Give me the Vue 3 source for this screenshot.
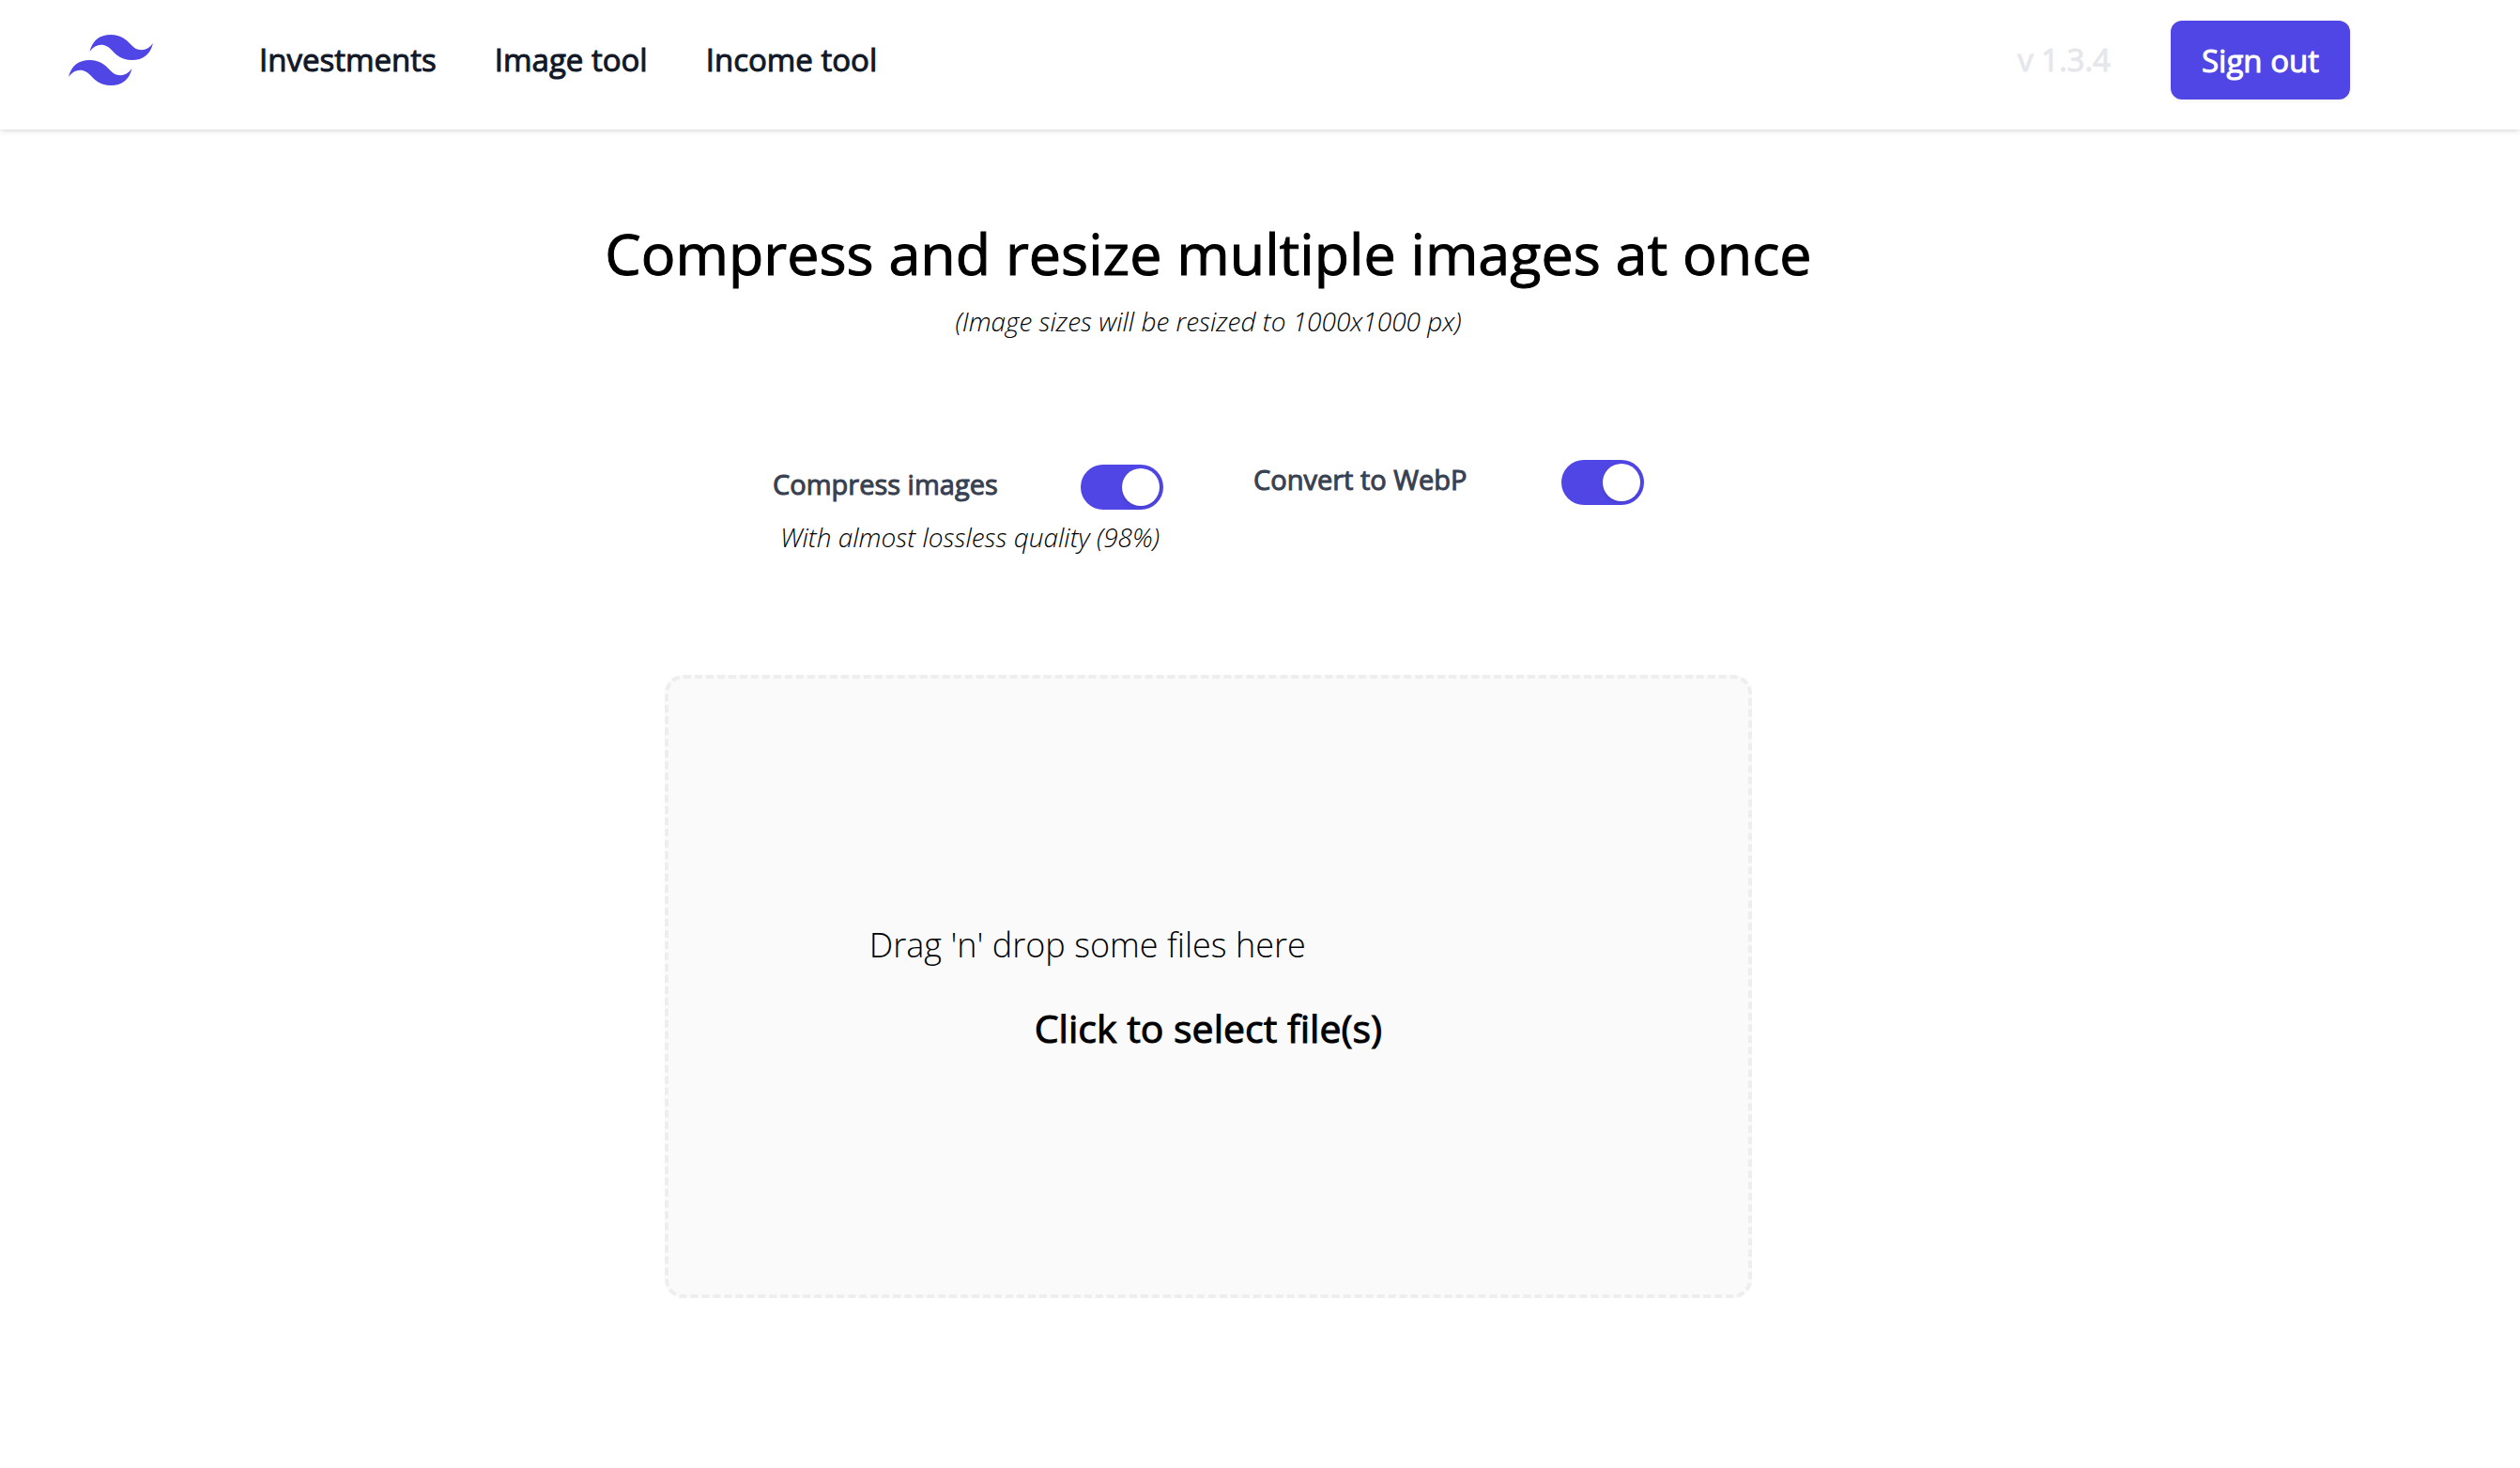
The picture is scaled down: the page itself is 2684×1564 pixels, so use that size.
<script setup>
import { ref } from 'vue'

const links = ['Investments', 'Image tool', 'Income tool']
const compress = ref(true)
const webp = ref(true)
</script>

<template>
  <header class="bar medium">
    <a class="logo" href="#" aria-label="Home">
      <svg viewBox="0 0 54 32.4" fill="currentColor" aria-hidden="true">
        <path d="M27 0c-7.200 0-11.700 3.600-13.500 10.800 2.700-3.600 5.850-4.950 9.450-4.050 2.054.513 3.522 2.004 5.147 3.653C30.744 13.090 33.808 16.200 40.500 16.200c7.200 0 11.700-3.600 13.500-10.800-2.700 3.600-5.850 4.950-9.450 4.050-2.054-.513-3.522-2.004-5.147-3.653C36.756 3.110 33.692 0 27 0zM13.500 16.200C6.300 16.200 1.800 19.800 0 27c2.700-3.600 5.850-4.950 9.450-4.050 2.054.514 3.522 2.004 5.147 3.653C17.244 29.290 20.308 32.400 27 32.400c7.200 0 11.700-3.600 13.500-10.800-2.700 3.600-5.850 4.950-9.450 4.050-2.054-.513-3.522-2.004-5.147-3.653C23.256 19.310 20.192 16.200 13.500 16.200z" />
      </svg>
    </a>
    <nav class="nav">
      <a v-for="link in links" :key="link" href="#">{{ link }}</a>
    </nav>
    <span class="version">v 1.3.4</span>
    <button class="sign-out medium" type="button">Sign out</button>
  </header>
  <main class="page">
    <h1 class="medium">Compress and resize multiple images at once</h1>
    <p class="note">(Image sizes will be resized to 1000x1000 px)</p>
    <div class="options">
      <div class="option">
        <label class="row lower medium">
          <span>Compress images</span>
          <input v-model="compress" type="checkbox" role="switch" />
        </label>
        <p class="note hint">With almost lossless quality (98%)</p>
      </div>
      <div class="option">
        <label class="row medium">
          <span>Convert to WebP</span>
          <input v-model="webp" type="checkbox" role="switch" />
        </label>
      </div>
    </div>
    <section class="drop">
      <p>Drag 'n' drop some files here</p>
      <button class="pick medium" type="button">Click to select file(s)</button>
    </section>
  </main>
</template>

<style>
body {
  background: #fff;
}
</style>

<style scoped>
.bar,
.page,
button {
  font-family: "Open Sans", sans-serif;
  color: #000;
}
/* Regular outlines thickened to a medium weight */
.medium {
  font-weight: 400;
  -webkit-text-stroke: 1px currentColor;
}
.bar {
  display: flex;
  align-items: center;
  box-sizing: border-box;
  height: 138px;
  padding: 0 181px 10px 73px;
  box-shadow: 0 2px 6px rgba(0, 0, 0, 0.1), 0 2px 4px -2px rgba(0, 0, 0, 0.1);
  font-size: 33px;
  line-height: 48px;
}
.logo {
  width: 90px;
  color: #4f46e5;
}
.logo svg {
  display: block;
  width: 100%;
}
.nav {
  display: flex;
  gap: 62px;
  margin-left: 113px;
}
.nav a {
  color: #111827;
  -webkit-text-stroke-color: #111827;
  text-decoration: none;
}
.version {
  margin-left: auto;
  color: #e5e7eb;
  -webkit-text-stroke-color: #e5e7eb;
}
.sign-out {
  margin-left: 64px;
  height: 84px;
  padding: 0 33px;
  border: 0;
  border-radius: 12px;
  background: #4f46e5;
  box-shadow: 0 2px 4px rgba(0, 0, 0, 0.05);
  color: #fff;
  font-size: 33px;
}
.page {
  display: flex;
  flex-direction: column;
  align-items: center;
  padding: 91px 110px 172px 0;
}
h1 {
  margin: 0;
  font-size: 61px;
  line-height: 82px;
}
p {
  margin: 0;
}
.note {
  margin-top: 10px;
  font-size: 28px;
  line-height: 42px;
  font-style: italic;
  font-weight: 300;
}
.options {
  display: flex;
  gap: 96px;
  margin-top: 127px;
}
.option {
  width: 416px;
}
.row {
  display: flex;
  justify-content: space-between;
  align-items: center;
  height: 48px;
  color: #374151;
  font-size: 29px;
}
.row span {
  padding-bottom: 8px;
}
.lower {
  margin-top: 5px;
}
.hint {
  margin-top: 8px;
  padding-left: 8px;
  white-space: nowrap;
}
input {
  display: flex;
  justify-content: flex-end;
  box-sizing: border-box;
  width: 88px;
  height: 48px;
  margin: 0;
  padding: 4px;
  border-radius: 24px;
  background: #d1d5db;
  appearance: none;
}
input::before {
  content: "";
  width: 40px;
  height: 40px;
  border-radius: 50%;
  background: #fff;
  box-shadow: 0 2px 4px rgba(0, 0, 0, 0.1);
}
input:checked {
  background: #4f46e5;
}
input:not(:checked) {
  justify-content: flex-start;
}
.drop {
  display: flex;
  flex-direction: column;
  justify-content: center;
  box-sizing: border-box;
  width: 45%;
  min-height: 664px;
  margin-top: 126px;
  padding: 0 214px;
  border: 4px dashed #eee;
  border-radius: 20px;
  background: #fafafa;
  font-size: 36px;
  line-height: 56px;
  font-weight: 300;
}
.pick {
  align-self: center;
  margin-top: 32px;
  padding: 0;
  border: 0;
  background: none;
  font-size: 41px;
  line-height: 56px;
}
</style>
